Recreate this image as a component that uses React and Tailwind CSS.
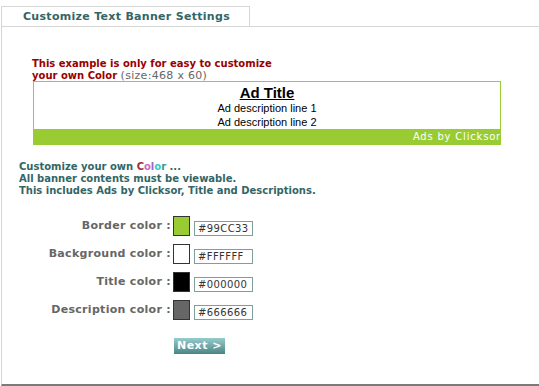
import React from "react";

const rows = [
  { label: "Border color :", swatch: "bg-[#99CC33]", value: "#99CC33" },
  { label: "Background color :", swatch: "bg-[#FFFFFF]", value: "#FFFFFF" },
  { label: "Title color :", swatch: "bg-[#000000]", value: "#000000" },
  { label: "Description color :", swatch: "bg-[#666666]", value: "#666666" },
];

const App = () => {
  return (
    <div className="w-[539px] h-[386px] bg-white overflow-hidden font-['DejaVu_Sans',Verdana,sans-serif]">
      {/* tab header */}
      <div className="pt-[6px] flex">
        <div className="ml-[1px] w-[249px] h-[20px] border border-b-0 border-[#d6d6d6] pl-[21px] pt-[3px] text-[11px] leading-[13px] font-bold text-[#336666] tracking-[0.3px]">
          Customize Text Banner Settings
        </div>
      </div>

      <div className="ml-[1px] h-[360px] border-t border-l border-[#d6d6d6] border-b-2 border-b-[#7a7a7a]">
        <div className="pl-[30px] pt-[31px] text-[10px] leading-[12px] font-bold text-[#990000]">
          <p>This example is only for easy to customize</p>
          <p>
            your own Color{" "}
            <span className="text-[11px] font-normal text-[#666666] tracking-[0.3px]">(size:468 x 60)</span>
          </p>
        </div>

        {/* banner preview */}
        <div className="ml-[31px] mt-[-1px] w-[468px] h-[64px] border border-[#99CC33] overflow-hidden flex flex-col">
          <div className="flex-1 flex flex-col items-center font-['Liberation_Sans',Arial,sans-serif]">
            <p className="text-[15px] leading-[17px] font-bold underline text-black mt-[2px]">Ad Title</p>
            <p className="text-[11px] leading-[14px] text-black">Ad description line 1</p>
            <p className="text-[11px] leading-[14px] text-black">Ad description line 2</p>
          </div>
          <div className="h-[15px] bg-[#99CC33] flex justify-end">
            <span className="text-[10px] leading-[15px] text-white tracking-[0.8px] whitespace-nowrap mr-[-1px]">
              Ads by Clicksor
            </span>
          </div>
        </div>

        <div className="pl-[17px] mt-[16px] text-[10px] leading-[12px] font-bold text-[#336666]">
          <p>
            Customize your own <span className="text-[#993333]">C</span>
            <span className="text-[#cc66cc]">o</span>
            <span className="text-[#9966cc]">l</span>
            <span className="text-[#33cccc]">o</span>
            <span className="text-[#339999]">r</span> ...
          </p>
          <p>All banner contents must be viewable.</p>
          <p>This includes Ads by Clicksor, Title and Descriptions.</p>
        </div>

        <div className="mt-[19px] flex flex-col gap-[8px]">
          {rows.map((r) => (
            <div key={r.value} className="flex items-center h-[20px]">
              <span className="w-[170px] text-right pr-[1px] text-[11px] font-bold text-[#666666] tracking-[0.3px]">
                {r.label}
              </span>
              <span className={`ml-[1px] w-[17px] h-[20px] border border-[#333333] ${r.swatch}`}></span>
              <span className="ml-[4px] mt-[4px] w-[59px] h-[15px] border border-[#7f9f9f] pl-[3px] text-[10px] leading-[13px] text-[#333333] tracking-[0.4px]">
                {r.value}
              </span>
            </div>
          ))}
        </div>

        <div className="mt-[12px] ml-[172px]">
          <button className="w-[51px] h-[16px] bg-gradient-to-b from-[#98cccc] to-[#4a8585] text-white text-[11px] leading-[16px] font-bold tracking-[0.5px]">
            Next &gt;
          </button>
        </div>
      </div>
    </div>
  );
};

export default App;
